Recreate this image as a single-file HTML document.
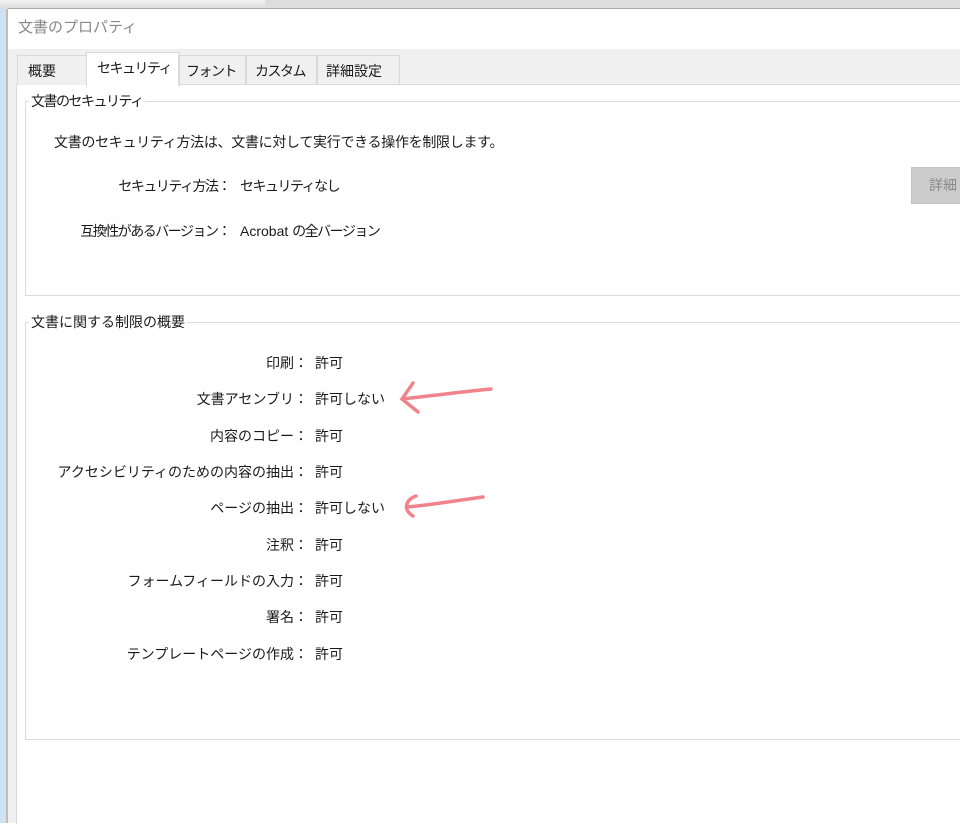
<!DOCTYPE html>
<html><head><meta charset="utf-8"><style>
body{margin:0;width:960px;height:823px;position:relative;overflow:hidden;background:#fff;font-family:"Liberation Sans","Noto Sans CJK JP",sans-serif;color:#1a1a1a;font-size:14px}
.a{position:absolute;white-space:nowrap;line-height:18px}
.r{text-align:right}
.t{letter-spacing:-1.5px}
</style></head><body>
<div class="a" style="left:0;top:0;width:960px;height:9px;background:linear-gradient(#f2f2f2,#dcdcdc)"></div>
<div class="a" style="left:265px;top:0;width:695px;height:9px;background:#dedede"></div>
<div class="a" style="left:0;top:9px;width:6px;height:814px;background:#cde2f2"></div>
<div class="a" style="left:6px;top:9px;width:2px;height:814px;background:#bdbdbd"></div>
<div class="a" style="left:8px;top:8px;width:952px;height:1px;background:#aaa"></div>
<div class="a" style="left:8px;top:9px;width:952px;height:40px;background:#fff"></div>
<div class="a" style="left:18px;top:19px;color:#888;font-size:15px">文書のプロパティ</div>
<div class="a" style="left:8px;top:49px;width:952px;height:774px;background:#f0f0f0"></div>
<div class="a" style="left:16px;top:84px;width:944px;height:739px;background:#fff;border-left:1px solid #d9d9d9;border-top:1px solid #d9d9d9"></div>
<div class="a" style="left:17px;top:55px;width:69px;height:29px;border:1px solid #d9d9d9;border-bottom:0;background:#f0f0f0"></div>
<div class="a" style="left:28px;top:62px">概要</div>
<div class="a" style="left:86px;top:52px;width:92px;height:34px;border:1px solid #d9d9d9;border-bottom:0;background:#fff"></div>
<div class="a t" style="left:97px;top:59px">セキュリティ</div>
<div class="a" style="left:178px;top:55px;width:67px;height:29px;border:1px solid #d9d9d9;border-bottom:0"></div>
<div class="a t" style="left:186px;top:62px">フォント</div>
<div class="a" style="left:245px;top:55px;width:71px;height:29px;border:1px solid #d9d9d9;border-bottom:0"></div>
<div class="a t" style="left:255px;top:62px">カスタム</div>
<div class="a" style="left:316px;top:55px;width:82px;height:29px;border:1px solid #d9d9d9;border-bottom:0"></div>
<div class="a" style="left:326px;top:62px">詳細設定</div>

<div class="a" style="left:25px;top:101px;width:940px;height:193px;border:1px solid #dcdcdc"></div>
<div class="a t" style="left:29px;top:92px;background:#fff;padding:0 2px">文書のセキュリティ</div>
<div class="a" style="left:54px;top:133px;letter-spacing:-0.3px">文書のセキュリティ方法は、文書に対して実行できる操作を制限します。</div>
<div class="a r t" style="right:730px;top:177px">セキュリティ方法：</div>
<div class="a t" style="left:240px;top:177px">セキュリティなし</div>
<div class="a r t" style="right:730px;top:222px">互換性があるバージョン：</div>
<div class="a" style="left:240px;top:222px">Acrobat <span class="t">の全バージョン</span></div>
<div class="a" style="left:911px;top:167px;width:60px;height:35px;background:#cccccc;border:1px solid #c4c4c4"></div>
<div class="a" style="left:929px;top:176px;color:#8a8a8a">詳細</div>

<div class="a" style="left:25px;top:322px;width:940px;height:416px;border:1px solid #dcdcdc"></div>
<div class="a" style="left:29px;top:313px;background:#fff;padding:0 2px">文書に関する制限の概要</div>
<div class="a r" style="right:652px;top:354px">印刷：</div><div class="a" style="left:315px;top:354px">許可</div>
<div class="a r" style="right:652px;top:390px">文書アセンブリ：</div><div class="a" style="left:315px;top:390px">許可しない</div>
<div class="a r" style="right:652px;top:427px">内容のコピー：</div><div class="a" style="left:315px;top:427px">許可</div>
<div class="a r" style="right:652px;top:463px">アクセシビリティのための内容の抽出：</div><div class="a" style="left:315px;top:463px">許可</div>
<div class="a r" style="right:652px;top:499px">ページの抽出：</div><div class="a" style="left:315px;top:499px">許可しない</div>
<div class="a r" style="right:652px;top:536px">注釈：</div><div class="a" style="left:315px;top:536px">許可</div>
<div class="a r" style="right:652px;top:572px">フォームフィールドの入力：</div><div class="a" style="left:315px;top:572px">許可</div>
<div class="a r" style="right:652px;top:608px">署名：</div><div class="a" style="left:315px;top:608px">許可</div>
<div class="a r" style="right:652px;top:645px">テンプレートページの作成：</div><div class="a" style="left:315px;top:645px">許可</div>

<svg class="a" style="left:0;top:0" width="960" height="823">
<g fill="none" stroke="#ee6f7a" stroke-width="3.5" stroke-linecap="round" opacity="0.85">
<path d="M491 389 C460 392 430 396 402 399"/>
<path d="M413 383 L402 399 L418 412"/>
<path d="M483 497 C460 500 430 505 407 507"/>
<path d="M416 496 C405 500 403 510 413 516"/>
</g></svg>
</body></html>
